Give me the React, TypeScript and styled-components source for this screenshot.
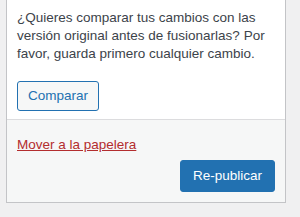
import { createGlobalStyle, styled } from "styled-components";

const GlobalStyle = createGlobalStyle`
  html, body {
    margin: 0;
    padding: 0;
    background: #f0f0f1;
  }
  body {
    font-family: "Liberation Sans", Arial, sans-serif;
    font-size: 13.5px;
    color: #3c434a;
  }
`;

const App = () => {
  return (
    <>
      <GlobalStyle />
      <Page>
        <Panel>
          <Body>
            <Notice>
              ¿Quieres comparar tus cambios con las versión original antes de
              fusionarlas? Por favor, guarda primero cualquier cambio.
            </Notice>
            <Button>Comparar</Button>
          </Body>
          <Actions>
            <DeleteAction>
              <TrashLink href="#">Mover a la papelera</TrashLink>
            </DeleteAction>
            <PublishAction>
              <Button $primary>Re-publicar</Button>
            </PublishAction>
          </Actions>
        </Panel>
      </Page>
    </>
  );
};

export default App;

const Page = styled.div`
  padding: 0 14px 14px 6px;
`;

const Panel = styled.div`
  width: 280px;
  box-sizing: border-box;
  border: 1px solid #c3c4c7;
  border-top: none;
  background: #fff;
`;

const Body = styled.div`
  padding: 9px 10px 8px 10px;
`;

const Notice = styled.p`
  margin: 0 0 17px;
  line-height: 18.2px;
`;

const Button = styled.button<{ $primary?: boolean }>`
  display: inline-block;
  box-sizing: border-box;
  font-family: inherit;
  font-size: 13.5px;
  line-height: 28px;
  min-height: ${(p) => (p.$primary ? "32px" : "30px")};
  padding: 0 ${(p) => (p.$primary ? "12px" : "10px")};
  border-radius: 3px;
  border: 1px solid #2271b1;
  background: ${(p) => (p.$primary ? "#2271b1" : "#f6f7f7")};
  color: ${(p) => (p.$primary ? "#fff" : "#2271b1")};
  cursor: pointer;
  vertical-align: top;
`;

const Actions = styled.div`
  padding: 10px;
  border-top: 1px solid #dcdcde;
  background: #f6f7f7;
`;

const DeleteAction = styled.div`
  line-height: 30px;
`;

const TrashLink = styled.a`
  color: #b32d2e;
  text-decoration: underline;
`;

const PublishAction = styled.div`
  display: flex;
  justify-content: flex-end;
`;
